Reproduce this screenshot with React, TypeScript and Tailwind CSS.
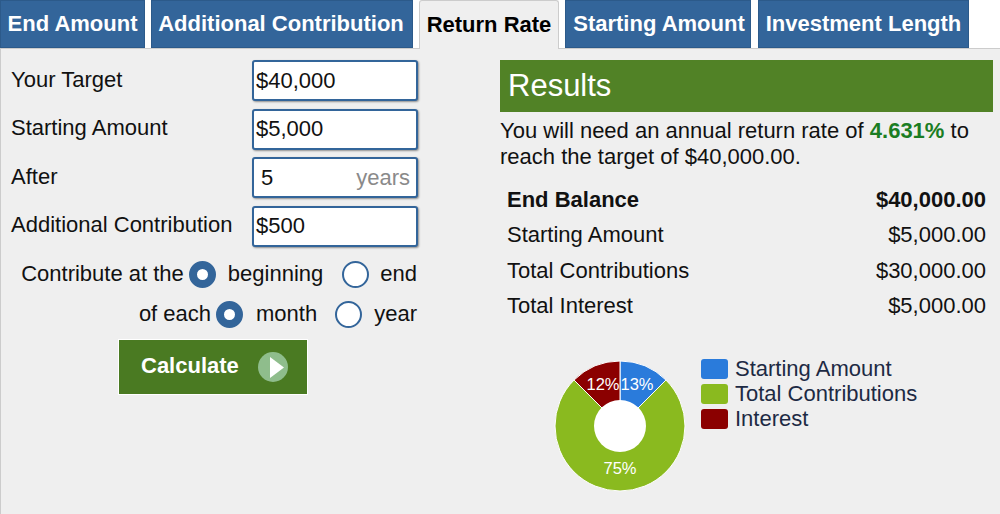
import React from "react";

const tabs = [
  { label: "End Amount", w: "w-[145px]", ml: "" },
  { label: "Additional Contribution", w: "w-[262px] pr-[2px]", ml: "ml-[6px]" },
  { label: "Return Rate", w: "w-[140px]", ml: "ml-[6px]", active: true },
  { label: "Starting Amount", w: "w-[186px] pl-[2px]", ml: "ml-[6px]" },
  { label: "Investment Length", w: "w-[211px]", ml: "ml-[7px]" },
];

function Input({ value }: { value: string }) {
  return (
    <div className="w-[166px] h-[41px] bg-white border-2 border-[#33659a] rounded-[3px] shadow-[1px_1px_2px_rgba(0,0,0,0.4)] flex items-center pl-[2px] text-[22px] text-[#111]">
      {value}
    </div>
  );
}

function Row({ label, children }: { label: string; children: React.ReactNode }) {
  return (
    <div className="flex items-center justify-between h-[41px]">
      <span className="pb-[2px]">{label}</span>
      {children}
    </div>
  );
}

function Radio({ on }: { on?: boolean }) {
  return on ? (
    <span className="inline-block w-[27px] h-[27px] rounded-full border-[8px] border-[#33659a] bg-white" />
  ) : (
    <span className="inline-block w-[27px] h-[27px] rounded-full border-2 border-[#33659a] bg-white" />
  );
}

const rows = [
  ["End Balance", "$40,000.00", true],
  ["Starting Amount", "$5,000.00"],
  ["Total Contributions", "$30,000.00"],
  ["Total Interest", "$5,000.00"],
] as const;

const legend = [
  ["Starting Amount", "bg-[#2a7bdb]"],
  ["Total Contributions", "bg-[#8aba1f]"],
  ["Interest", "bg-[#8b0000]"],
];

function Pie() {
  const c = 66;
  const r = 65;
  const pt = (deg: number, rad: number) => {
    const a = ((deg - 90) * Math.PI) / 180;
    return `${c + rad * Math.cos(a)} ${c + rad * Math.sin(a)}`;
  };
  const wedge = (from: number, to: number) =>
    `M${c} ${c} L${pt(from, r)} A${r} ${r} 0 ${to - from > 180 ? 1 : 0} 1 ${pt(to, r)} Z`;
  return (
    <svg width="132" height="132" viewBox="0 0 132 132" className="shrink-0">
      <path d={wedge(0, 45)} fill="#2a7bdb" stroke="#fff" strokeWidth="1" />
      <path d={wedge(45, 315)} fill="#8aba1f" stroke="#fff" strokeWidth="1" />
      <path d={wedge(315, 360)} fill="#8b0000" stroke="#fff" strokeWidth="1" />
      <circle cx={c} cy={c} r="26" fill="#fff" />
      <text x="83" y="30" textAnchor="middle" fontSize="16.5" fill="#fff" fontFamily="Liberation Sans">13%</text>
      <text x="49" y="30" textAnchor="middle" fontSize="16.5" fill="#fff" fontFamily="Liberation Sans">12%</text>
      <text x="66" y="114" textAnchor="middle" fontSize="16.5" fill="#fff" fontFamily="Liberation Sans">75%</text>
    </svg>
  );
}

export default function App() {
  return (
    <div className="w-[1000px] h-[514px] bg-white overflow-hidden font-['Liberation_Sans',Arial,sans-serif] text-[22px] leading-[26px] text-[#111]">
      <div className="flex h-[48px] relative z-10">
        {tabs.map((t) => (
          <div
            key={t.label}
            className={`${t.w} ${t.ml} flex items-center justify-center font-bold ${
              t.active
                ? "h-[49px] bg-[#efefef] text-black border border-b-0 border-[#ccc] rounded-t-[3px]"
                : "h-[48px] bg-[#33659a] text-white border border-[#2c5a8a]"
            }`}
          >
            {t.label}
          </div>
        ))}
      </div>
      <div className="flex h-[466px] bg-[#efefef] border-t border-l border-[#ccc] pt-[11px]">
        <div className="w-[417px] shrink-0 pl-[10px]">
          <div className="flex flex-col gap-[7.5px]">
            <Row label="Your Target"><Input value="$40,000" /></Row>
            <Row label="Starting Amount"><Input value="$5,000" /></Row>
            <Row label="After">
              <div className="w-[166px] h-[41px] bg-white border-2 border-[#33659a] rounded-[3px] shadow-[1px_1px_2px_rgba(0,0,0,0.4)] flex items-center justify-between pl-[7px] pr-[6px]">
                <span>5</span>
                <span className="text-[#8a8a8a]">years</span>
              </div>
            </Row>
            <Row label="Additional Contribution"><Input value="$500" /></Row>
          </div>
          <div className="flex items-center justify-end h-[27px] mt-[14px] pr-[1px]">
            <span>Contribute at the</span>
            <span className="ml-[5px] flex"><Radio on /></span>
            <span className="ml-[12px]">beginning</span>
            <span className="ml-[19px] flex"><Radio /></span>
            <span className="ml-[11px]">end</span>
          </div>
          <div className="flex items-center justify-end h-[27px] mt-[13px] pr-[1px]">
            <span>of each</span>
            <span className="ml-[5px] flex"><Radio on /></span>
            <span className="ml-[13px]">month</span>
            <span className="ml-[18px] flex"><Radio /></span>
            <span className="ml-[12px]">year</span>
          </div>
          <div className="pl-[108px] mt-[12px]">
            <div className="w-[188px] h-[54px] bg-[#4a7a22] shadow-[0_0_0_1px_#fff] flex items-center pl-[22px] text-white font-bold text-[22px]">
              <span className="pb-[2px]">Calculate</span>
              <svg width="30" height="30" viewBox="0 0 30 30" className="ml-[19px]">
                <circle cx="15" cy="15" r="15" fill="#8fbd8c" />
                <path d="M12 5 L26 15.5 L12 26 Z" fill="#fff" />
              </svg>
            </div>
          </div>
        </div>
        <div className="ml-[82px] w-[493px] shrink-0">
          <div className="h-[52px] bg-[#518226] text-white text-[31px] flex items-center pl-[8px]">
            <span className="pb-[1px]">Results</span>
          </div>
          <p className="mt-[6px] leading-[26px]">
            You will need an annual return rate of{" "}
            <b className="text-[#1b7d23]">4.631%</b> to
            <br />
            reach the target of $40,000.00.
          </p>
          <div className="mt-[12px] pl-[7px] pr-[7px]">
            {rows.map((r) => (
              <div key={r[0]} className={`flex justify-between h-[35.5px] items-center ${r[2] ? "font-bold" : ""}`}>
                <span>{r[0]}</span>
                <span>{r[1]}</span>
              </div>
            ))}
          </div>
          <div className="flex mt-[36px] pl-[54px]">
            <Pie />
            <div className="ml-[15px] -mt-[4px] text-[#1d2a44]">
              {legend.map(([l, c]) => (
                <div key={l} className="flex items-center h-[25px]">
                  <span className={`w-[27px] h-[20px] rounded-[3px] ${c}`} />
                  <span className="ml-[7px]">{l}</span>
                </div>
              ))}
            </div>
          </div>
        </div>
      </div>
    </div>
  );
}
